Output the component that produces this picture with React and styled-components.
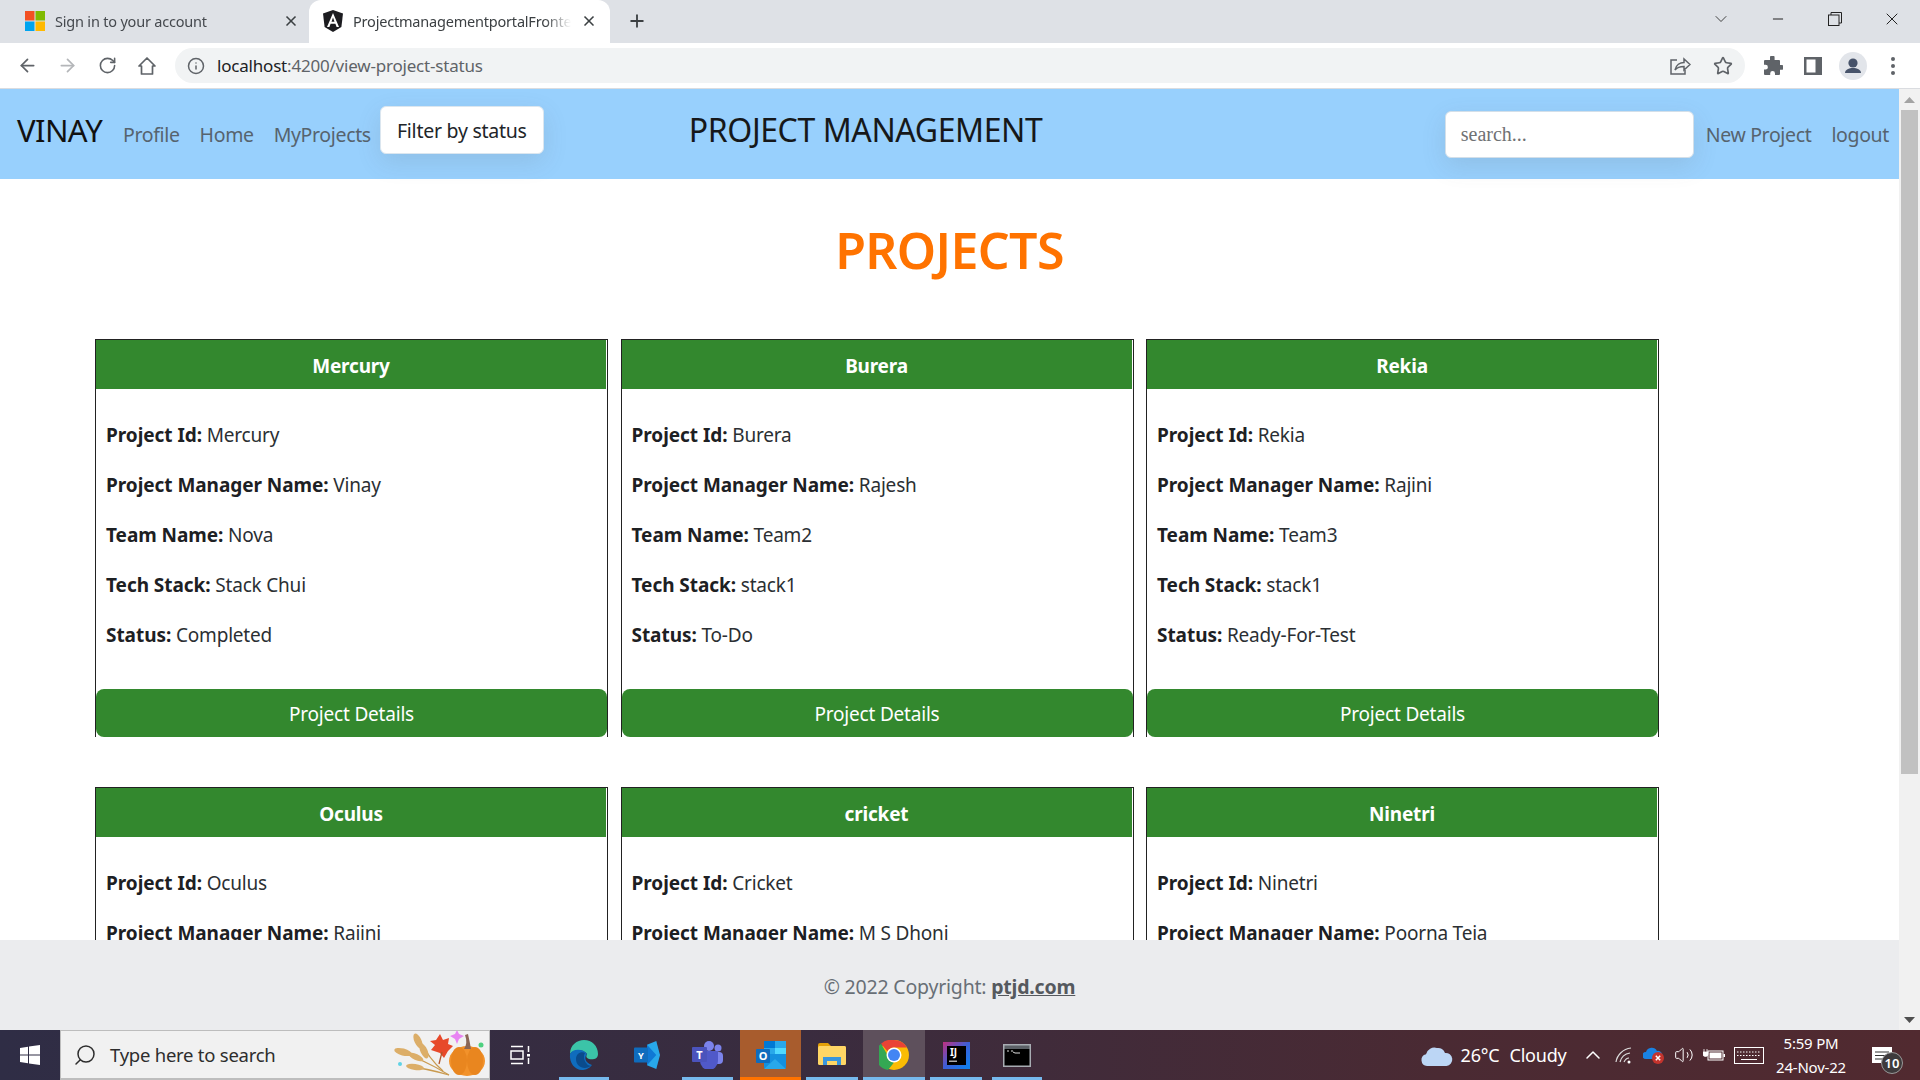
import styled, { createGlobalStyle } from 'styled-components'
import { ArrowLeft, ArrowRight, RotateCw, Info, Star, X, Plus, ChevronDown, Minus, ChevronUp, Search, Volume2 } from 'lucide-react'

const Global = createGlobalStyle`
    * { box-sizing: border-box; }
    html, body { margin: 0; padding: 0; overflow: hidden; }
    body { font-family: "Noto Sans", "Open Sans", sans-serif; color: #212529; }
`

const Screen = styled.div`
    width: 1920px;
    height: 1080px;
    display: flex;
    flex-direction: column;
    overflow: hidden;
    background: #fff;
`

/* browser chrome */
const TabStrip = styled.div`
    height: 43px;
    background: #dee1e6;
    display: flex;
    flex: none;
`
const Tab = styled.div`
    width: ${(p) => p.$width}px;
    height: 43px;
    padding: 0 ${(p) => p.$right}px 2px ${(p) => p.$left}px;
    display: flex;
    align-items: center;
    gap: 10px;
    border-radius: 12px 12px 0 0;
    background: ${(p) => (p.$active ? '#fff' : 'transparent')};
    font-size: 14.5px;
    letter-spacing: -0.2px;
    color: ${(p) => (p.$active ? '#3c4043' : '#45494e')};
    svg { flex: none; }
`
const TabTitle = styled.span`
    flex: 1;
    white-space: nowrap;
    overflow: hidden;
    -webkit-mask-image: linear-gradient(90deg, #000 88%, transparent);
    mask-image: linear-gradient(90deg, #000 88%, transparent);
`
const NewTab = styled.div`
    width: 54px;
    height: 41px;
    display: flex;
    align-items: center;
    justify-content: center;
    color: #3c4043;
`
const WindowControls = styled.div`
    margin-left: auto;
    height: 38px;
    display: flex;
    align-items: center;
    color: #222;
`
const WindowButton = styled.div`
    width: 57px;
    display: flex;
    justify-content: center;
`
const Toolbar = styled.div`
    height: 46px;
    flex: none;
    background: #fff;
    border-bottom: 1px solid #dadce0;
    display: flex;
    align-items: center;
    padding-left: 7px;
    color: #5f6368;
`
const ToolButton = styled.div`
    width: 40px;
    height: 36px;
    display: flex;
    align-items: center;
    justify-content: center;
    color: ${(p) => (p.$off ? '#b4b6b9' : '#5f6368')};
`
const Omnibox = styled.div`
    width: 1570px;
    height: 35px;
    margin: 0 8px;
    padding: 0 2px 0 12px;
    border-radius: 18px;
    background: #f1f3f4;
    display: flex;
    align-items: center;
    gap: 12px;
`
const Url = styled.span`
    flex: 1;
    font-size: 17px;
    letter-spacing: -0.2px;
    color: #5f6368;
    b { font-weight: 400; color: #202124; }
`

/* page */
const Viewport = styled.div`
    flex: 1;
    min-height: 0;
    display: flex;
`
const Page = styled.div`
    flex: 1;
    min-width: 0;
    display: flex;
    flex-direction: column;
`
const Nav = styled.nav`
    height: 90px;
    flex: none;
    padding: 0 10px 0 17px;
    background: #98d0fd;
    display: flex;
    align-items: flex-start;
`
const Brand = styled.div`
    width: 106px;
    margin-top: 21px;
    font-size: 31px;
    line-height: 40px;
    letter-spacing: -0.6px;
    color: #111;
`
const NavLink = styled.a`
    margin: 31px ${(p) => p.$gap ?? 20}px 0 0;
    font-size: 19.5px;
    line-height: 30px;
    letter-spacing: -0.35px;
    color: #56636e;
    white-space: nowrap;
`
const FilterButton = styled.button`
    width: 164px;
    height: 48px;
    margin: 17px 145px 0 9px;
    border: 1px solid #dbe6ef;
    border-radius: 6px;
    background: #fff;
    font: inherit;
    font-size: 19.5px;
    letter-spacing: -0.25px;
    color: #212529;
    box-shadow: 0 8px 24px rgba(90, 90, 90, 0.14);
`
const NavTitle = styled.div`
    margin-top: 19px;
    font-size: 32px;
    line-height: 44px;
    letter-spacing: -0.4px;
    color: #16181a;
    white-space: nowrap;
`
const SearchBox = styled.input`
    width: 249px;
    height: 47px;
    margin: 22px 12px 0 auto;
    padding: 0 15px;
    border: 1px solid #d3dfe9;
    border-radius: 6px;
    background: #fff;
    font-family: "Liberation Serif", serif;
    font-size: 20px;
    box-shadow: 0 8px 24px rgba(90, 90, 90, 0.14);
    &::placeholder { color: #6f7173; opacity: 1; }
`
const Content = styled.main`
    flex: 1;
    min-height: 0;
    overflow: hidden;
`
const Heading = styled.h1`
    margin: 0;
    height: 160px;
    padding-top: 39px;
    text-align: center;
    font-size: 50px;
    line-height: 64px;
    font-weight: 600;
    letter-spacing: -0.6px;
    color: #ff7300;
`
const Cards = styled.div`
    display: grid;
    grid-template-columns: repeat(3, 513px);
    column-gap: 12.5px;
    row-gap: 50px;
    padding-left: 95px;
`
const Card = styled.article`
    height: 398px;
    border: 1px solid #222;
    border-bottom: 0;
    display: flex;
    flex-direction: column;
`
const CardHeader = styled.h2`
    margin: 0 1px 0 0;
    height: 49px;
    padding-top: 2px;
    flex: none;
    display: flex;
    align-items: center;
    justify-content: center;
    background: #33882e;
    color: #fff;
    font-size: 19px;
    font-weight: 700;
    letter-spacing: -0.2px;
`
const CardBody = styled.div`
    flex: 1;
    padding: 31px 10px 0;
`
const Line = styled.p`
    margin: 0 0 20px;
    font-size: 19px;
    line-height: 30px;
    letter-spacing: -0.2px;
    color: #2b2f33;
    b { font-weight: 700; letter-spacing: -0.05px; color: #1d2023; }
`
const DetailsButton = styled.button`
    height: 48px;
    padding-top: 3px;
    flex: none;
    border: 0;
    border-radius: 8px;
    background: #33882e;
    color: #fff;
    font: inherit;
    font-size: 19px;
    letter-spacing: -0.2px;
`
const Footer = styled.footer`
    height: 90px;
    flex: none;
    padding-top: 32px;
    background: #ebecee;
    text-align: center;
    font-size: 19.5px;
    line-height: 30px;
    letter-spacing: -0.2px;
    color: #686f76;
    a { font-weight: 700; color: #55595e; text-decoration: underline; }
`
const Scrollbar = styled.div`
    width: 21px;
    flex: none;
    padding: 1px 2px 0;
    background: #f1f1f1;
    display: flex;
    flex-direction: column;
    align-items: center;
`
const ScrollArrow = styled.div`
    height: 20px;
    display: flex;
    align-items: center;
`
const ScrollThumb = styled.div`
    width: 17px;
    height: 664px;
    background: #c1c1c1;
`
const ScrollEnd = styled(ScrollArrow)`
    margin-top: auto;
`

/* taskbar */
const Taskbar = styled.div`
    height: 50px;
    flex: none;
    display: flex;
    align-items: center;
    color: #fff;
    background: linear-gradient(90deg, #2f2d45 0%, #392c3f 40%, #4a2a33 75%, #512a30 100%);
`
const StartButton = styled.div`
    width: 60px;
    display: flex;
    justify-content: center;
`
const TaskSearch = styled.div`
    width: 430px;
    height: 50px;
    padding-left: 12px;
    border: 1px solid #bdbdbd;
    border-bottom-width: 2px;
    background: #f1f1f1;
    display: flex;
    align-items: center;
    gap: 13px;
    font-size: 18.5px;
    letter-spacing: -0.25px;
    color: #2d2d2d;
    svg:last-child { margin-left: auto; }
`
const AppSlot = styled.div`
    width: ${(p) => p.$width || 61}px;
    height: 50px;
    position: relative;
    display: flex;
    align-items: center;
    justify-content: center;
    background: ${(p) => p.$bg || 'transparent'};
    &::after {
        content: '';
        position: absolute;
        display: ${(p) => (p.$mark ? 'block' : 'none')};
        left: ${(p) => p.$inset ?? 5}px;
        right: ${(p) => p.$inset ?? 5}px;
        bottom: 0;
        height: 3px;
        background: ${(p) => (p.$mark === 'alert' ? '#ff7300' : '#76b9ed')};
    }
`
const Tray = styled.div`
    margin-left: auto;
    height: 50px;
    padding-right: 13px;
    display: flex;
    align-items: center;
`
const TrayItem = styled.div`
    width: ${(p) => p.$width}px;
    display: flex;
    align-items: center;
    justify-content: center;
    font-size: 18px;
    letter-spacing: -0.2px;
    white-space: nowrap;
`
const Clock = styled.div`
    width: 92px;
    text-align: center;
    font-size: 15px;
    line-height: 24px;
    letter-spacing: -0.2px;
`
const Notify = styled.div`
    width: 50px;
    height: 50px;
    position: relative;
    display: flex;
    align-items: center;
    justify-content: center;
`
const Badge = styled.span`
    position: absolute;
    right: 4px;
    bottom: 6px;
    width: 22px;
    height: 22px;
    border-radius: 50%;
    border: 1px solid #999;
    background: #3e3a3c;
    display: flex;
    align-items: center;
    justify-content: center;
    font-size: 13px;
    font-weight: 600;
`

const MsLogo = () => (
    <svg width="20" height="20" viewBox="0 0 20 20">
        <rect width="9.5" height="9.5" fill="#f25022" />
        <rect x="10.5" width="9.5" height="9.5" fill="#7fba00" />
        <rect y="10.5" width="9.5" height="9.5" fill="#00a4ef" />
        <rect x="10.5" y="10.5" width="9.5" height="9.5" fill="#ffb900" />
    </svg>
)
const AngularLogo = () => (
    <svg width="20" height="22" viewBox="0 0 20 22">
        <path d="M10 0 L20 3.6 L18.4 17 L10 22 L1.6 17 L0 3.6Z" fill="#1c1c20" />
        <path d="M10 3 L4 17 H6.4 L7.6 13.8 H12.4 L13.6 17 H16Z M8.5 11.8 L10 7.6 L11.5 11.8Z" fill="#fff" fillRule="evenodd" />
    </svg>
)
const HomeIcon = () => (
    <svg width="20" height="20" viewBox="0 0 20 20" fill="none" stroke="#5f6368" strokeWidth="1.7" strokeLinejoin="round">
        <path d="M10 2 L18 10 H15.5 V18 H4.5 V10 H2Z" />
    </svg>
)
const ShareIcon = () => (
    <svg width="22" height="20" viewBox="0 0 22 20" fill="none" stroke="#5f6368" strokeWidth="1.5">
        <path d="M8 4H2v14h14v-4" />
        <path d="M6 14c1-5 5-7.5 9-7.5V3l6 5.5-6 5.5v-3.5c-4 0-7 1-9 3.5z" />
    </svg>
)
const PuzzleIcon = () => (
    <svg width="20" height="20" viewBox="0 0 20 20" fill="#5f6368">
        <path d="M7 1.5a2.3 2.3 0 0 1 4.6 0V4H16a1 1 0 0 1 1 1v4h1.5a2.4 2.4 0 0 1 0 4.8H17V18a1 1 0 0 1-1 1h-4v-1.5a2.4 2.4 0 0 0-4.8 0V19H2a1 1 0 0 1-1-1v-4.4h1.5a2.4 2.4 0 0 0 0-4.8H1V5a1 1 0 0 1 1-1h5z" />
    </svg>
)
const SidePanelIcon = () => (
    <svg width="18" height="18" viewBox="0 0 18 18">
        <rect width="18" height="18" fill="#5f6368" />
        <rect x="2.5" y="2.5" width="9" height="13" fill="#fff" />
    </svg>
)
const Avatar = () => (
    <svg width="28" height="28" viewBox="0 0 28 28">
        <circle cx="14" cy="14" r="14" fill="#e2e5ea" />
        <circle cx="14" cy="11" r="4.6" fill="#47536a" />
        <path d="M6 21c0-3.5 4-5 8-5s8 1.5 8 5z" fill="#47536a" />
    </svg>
)
const Dots = () => (
    <svg width="6" height="20" viewBox="0 0 6 20" fill="#5f6368">
        <circle cx="3" cy="3" r="2" /><circle cx="3" cy="10" r="2" /><circle cx="3" cy="17" r="2" />
    </svg>
)
const RestoreIcon = () => (
    <svg width="14" height="14" viewBox="0 0 14 14" fill="none" stroke="#222" strokeWidth="1">
        <rect x="0.5" y="3" width="10.5" height="10.5" />
        <path d="M3 3V0.5h10.500V11H11" />
    </svg>
)
const WindowsLogo = () => (
    <svg width="20" height="20" viewBox="0 0 20 20" fill="#fff">
        <path d="M0 3l8-1.2v7.700H0zM9 1.600L20 0v9.500H9zM0 10.500h8v7.700L0 17zM9 10.500h11V20L9 18.400z" />
    </svg>
)
const Harvest = () => (
    <svg width="96" height="48" viewBox="0 0 96 48">
        <g stroke="#c99a4f" strokeWidth="1.3" fill="none">
            <path d="M26 8 Q36 28 50 40" />
            <path d="M4 20 Q30 28 56 44" />
            <path d="M14 35 Q36 38 56 44" />
        </g>
        <g fill="#dcae68">
            <ellipse cx="25" cy="10" rx="3.5" ry="8" transform="rotate(-25 25 10)" />
            <ellipse cx="31" cy="20" rx="3.5" ry="8" transform="rotate(-25 31 20)" />
            <ellipse cx="10" cy="21" rx="9" ry="3.5" transform="rotate(15 10 21)" />
            <ellipse cx="23" cy="26" rx="8" ry="3" transform="rotate(25 23 26)" />
            <ellipse cx="22" cy="36" rx="9" ry="3" transform="rotate(8 22 36)" />
        </g>
        <path d="M47 3 L50 9 L56 7 L55 13 L60 15 L55 20 L51 27 L47 22 L38 19 L42 14 L37 10 L43 9Z" fill="#e7492a" />
        <path d="M49 21 L46 33" stroke="#b0552a" strokeWidth="1.3" />
        <path d="M62 3 L64 -1 L66 3 L71 5 L66 8 L64 13 L62 8 L57 5Z" fill="#e884f2" />
        <ellipse cx="74" cy="30" rx="18" ry="15" fill="#f2922b" />
        <ellipse cx="66" cy="30" rx="8" ry="14" fill="#e9861f" />
        <ellipse cx="82" cy="30" rx="8" ry="14" fill="#e9861f" />
        <path d="M71 18 Q75 12 72 4 L75 3 Q77 12 78 18Z" fill="#8a6656" />
        <circle cx="88" cy="14" r="2.5" fill="#4ed07f" />
        <circle cx="7" cy="33" r="2" fill="#5fd3e6" />
    </svg>
)
const TaskView = () => (
    <svg width="20" height="20" viewBox="0 0 20 20" fill="none" stroke="#fff" strokeWidth="1.5">
        <rect x="1" y="6" width="12" height="8" />
        <path d="M1 1.5h12M1 18.500h12M18.500 1v6M18.500 13v6" />
        <rect x="17" y="9" width="3" height="2.5" fill="#fff" stroke="none" />
    </svg>
)
const EdgeIcon = () => (
    <svg width="30" height="32" viewBox="0 0 30 32">
        <path d="M1 15C1 6 8 1 15 1c8 0 14 6 14 14 0 5-5 6-9 5-3-1-3-3-2-5-2-4-13-6-17 0z" fill="#3bc4a8" />
        <path d="M1 15c3-6 14-5 17 0-3 3-2 9 5 11-3 4-7 5-10 5-7 0-13-7-12-16z" fill="#0f6cbd" />
        <path d="M7 20c0-5 5-8 9-6-2 3-1 8 2 11 1 2 5 2 5 1-7 6-16 2-16-6z" fill="#0a4b8c" />
    </svg>
)
const YammerIcon = () => (
    <svg width="26" height="28" viewBox="0 0 28 30">
        <path d="M14 4 L24 0 L28 15 L24 30 L14 26Z" fill="#28a8ea" />
        <path d="M14 4 L24 15 L14 26Z" fill="#0f78d4" />
        <rect x="0" y="7" width="15" height="16" rx="1" fill="#0f6cbd" />
        <text x="7.5" y="19" fontSize="10" fontWeight="700" fill="#fff" textAnchor="middle">Y</text>
    </svg>
)
const TeamsIcon = () => (
    <svg width="32" height="28" viewBox="0 0 32 28">
        <circle cx="26" cy="7" r="3.5" fill="#7b83eb" />
        <rect x="20" y="11" width="11" height="12" rx="4" fill="#7b83eb" />
        <circle cx="17" cy="5" r="5" fill="#7b83eb" />
        <path d="M8 10h18v10a9 9 0 0 1-18 0z" fill="#5059c9" />
        <rect x="0" y="6" width="15" height="15" rx="1" fill="#4b53bc" />
        <text x="7.5" y="18" fontSize="11" fontWeight="700" fill="#fff" textAnchor="middle">T</text>
    </svg>
)
const OutlookIcon = () => (
    <svg width="30" height="28" viewBox="0 0 30 28">
        <rect x="8" y="0" width="22" height="14" fill="#28a8ea" />
        <rect x="8" y="0" width="11" height="7" fill="#0078d4" />
        <rect x="19" y="7" width="11" height="7" fill="#50d9ff" />
        <path d="M8 13 L30 13 V26 a2 2 0 0 1-2 2H10a2 2 0 0 1-2-2z" fill="#1490df" />
        <path d="M8 28 L19 18 L30 28z" fill="#28a8ea" />
        <rect x="0" y="8" width="14" height="14" rx="1" fill="#0f6cbd" />
        <text x="7" y="19" fontSize="11" fontWeight="700" fill="#fff" textAnchor="middle">O</text>
    </svg>
)
const FolderIcon = () => (
    <svg width="28" height="24" viewBox="0 0 28 24">
        <path d="M0 2a2 2 0 0 1 2-2h8l3 3h13a2 2 0 0 1 2 2v3H0z" fill="#e3a008" />
        <rect x="0" y="3" width="28" height="19" rx="1.5" fill="#ffd665" />
        <path d="M5 22V14h18v8h-4v-4H9v4z" fill="#3a96dd" />
    </svg>
)
const ChromeIcon = () => (
    <svg width="30" height="30" viewBox="0 0 30 30">
        <circle cx="15" cy="15" r="15" fill="#fbbc04" />
        <path d="M15 0a15 15 0 0 1 13 7.5H15a7.500 7.500 0 0 0-6.500 3.750L2 3.800A15 15 0 0 1 15 0z" fill="#ea4335" />
        <path d="M2 3.800l6.500 11.200a7.500 7.500 0 0 0 6.500 7.500L9 30A15 15 0 0 1 2 3.800z" fill="#34a853" />
        <circle cx="15" cy="15" r="7.5" fill="#fff" />
        <circle cx="15" cy="15" r="6" fill="#4285f4" />
    </svg>
)
const IdeaIcon = () => (
    <svg width="27" height="27" viewBox="0 0 27 27">
        <defs>
            <linearGradient id="ij" x1="0" y1="0" x2="1" y2="1">
                <stop offset="0" stopColor="#c2307f" />
                <stop offset="0.5" stopColor="#3b5fd8" />
                <stop offset="1" stopColor="#0a84ef" />
            </linearGradient>
        </defs>
        <rect width="27" height="27" fill="url(#ij)" />
        <rect x="4" y="4" width="19" height="19" fill="#000" />
        <text x="10.5" y="14" fontSize="10" fontWeight="700" fill="#fff" textAnchor="middle">IJ</text>
        <rect x="6" y="18.5" width="8" height="1.5" fill="#aaa" />
    </svg>
)
const ConsoleIcon = () => (
    <svg width="28" height="23" viewBox="0 0 28 23">
        <rect width="28" height="23" fill="#a8adb3" />
        <rect x="1.5" y="5" width="25" height="16.5" fill="#000" />
        <rect x="1.5" y="1.5" width="25" height="3.5" fill="#5b6066" />
        <path d="M4 7h2M8 7h2M10 8l2 1h5" stroke="#ddd" strokeWidth="1" />
    </svg>
)
const CloudIcon = () => (
    <svg width="32" height="22" viewBox="0 0 32 22">
        <path d="M6 22a6 6 0 0 1-1-11.800A8.500 8.500 0 0 1 16 4a7 7 0 0 1 8 5 6.500 6.500 0 0 1 1.500 13z" fill="#bcd6f5" />
    </svg>
)
const WifiIcon = () => (
    <svg width="18" height="17" viewBox="0 0 18 17" fill="none" stroke="#ddd" strokeWidth="1.2">
        <path d="M1 15C2 8 8 2 16 1M5 15c1-4 4-8 10-9M9 15c1-2 2-4 5-4" />
        <circle cx="14" cy="15" r="1.5" fill="#fff" stroke="none" />
    </svg>
)
const OneDriveIcon = () => (
    <svg width="22" height="20" viewBox="0 0 22 20">
        <path d="M3 14a3.500 3.500 0 0 1 0-7 6 6 0 0 1 11-1 4 4 0 0 1 2 8z" fill="#1a82e2" />
        <circle cx="15" cy="13" r="6" fill="#c4342d" />
        <path d="M12.800 10.800l4.400 4.400M17.200 10.800l-4.400 4.400" stroke="#fff" strokeWidth="1.5" />
    </svg>
)
const BatteryIcon = () => (
    <svg width="22" height="14" viewBox="0 0 22 14">
        <path d="M1 1v3M4 1v3M0 4h5v2a2.500 2.500 0 0 1-5 0z" fill="#fff" stroke="#fff" strokeWidth=".8" />
        <rect x="5" y="3" width="15" height="9" fill="none" stroke="#fff" />
        <rect x="6.5" y="4.5" width="12" height="6" fill="#fff" />
        <rect x="20.5" y="6" width="1.5" height="3" fill="#fff" />
    </svg>
)
const KeyboardIcon = () => (
    <svg width="30" height="17" viewBox="0 0 30 17" fill="none" stroke="#fff">
        <rect x="0.5" y="0.5" width="29" height="16" />
        <path d="M3 5h24M3 8.500h24" strokeDasharray="1.5 1.5" />
        <path d="M7 12.500h16" />
    </svg>
)
const NoteIcon = () => (
    <svg width="20" height="17" viewBox="0 0 20 17">
        <path d="M0 0h20v16H0z" fill="#fff" />
        <path d="M3 5h14M3 8.500h14M3 12h9" stroke="#333" strokeWidth="1.2" />
    </svg>
)

const projects = [
    { title: 'Mercury', id: 'Mercury', manager: 'Vinay', team: 'Nova', stack: 'Stack Chui', status: 'Completed' },
    { title: 'Burera', id: 'Burera', manager: 'Rajesh', team: 'Team2', stack: 'stack1', status: 'To-Do' },
    { title: 'Rekia', id: 'Rekia', manager: 'Rajini', team: 'Team3', stack: 'stack1', status: 'Ready-For-Test' },
    { title: 'Oculus', id: 'Oculus', manager: 'Rajini' },
    { title: 'cricket', id: 'Cricket', manager: 'M S Dhoni' },
    { title: 'Ninetri', id: 'Ninetri', manager: 'Poorna Teja' },
]

const ProjectCard = ({ title, id, manager, team, stack, status }) => (
    <Card>
        <CardHeader>{title}</CardHeader>
        <CardBody>
            <Line><b>Project Id:</b> {id}</Line>
            <Line><b>Project Manager Name:</b> {manager}</Line>
            {team && <Line><b>Team Name:</b> {team}</Line>}
            {stack && <Line><b>Tech Stack:</b> {stack}</Line>}
            {status && <Line><b>Status:</b> {status}</Line>}
        </CardBody>
        <DetailsButton>Project Details</DetailsButton>
    </Card>
)

const App = () => {
    return (
        <Screen>
            <Global />
            <TabStrip>
                <Tab $width={309} $left={25} $right={10}>
                    <MsLogo />
                    <TabTitle>Sign in to your account</TabTitle>
                    <X size={16} strokeWidth={2.5} color="#3c4043" />
                </Tab>
                <Tab $active $width={301} $left={14} $right={13}>
                    <AngularLogo />
                    <TabTitle>ProjectmanagementportalFrontend</TabTitle>
                    <X size={16} strokeWidth={2.5} color="#3c4043" />
                </Tab>
                <NewTab><Plus size={20} strokeWidth={2.2} /></NewTab>
                <WindowControls>
                    <WindowButton><ChevronDown size={20} strokeWidth={1} /></WindowButton>
                    <WindowButton><Minus size={16} strokeWidth={1.5} /></WindowButton>
                    <WindowButton><RestoreIcon /></WindowButton>
                    <WindowButton><X size={20} strokeWidth={1.2} /></WindowButton>
                </WindowControls>
            </TabStrip>
            <Toolbar>
                <ToolButton><ArrowLeft size={21} /></ToolButton>
                <ToolButton $off><ArrowRight size={21} /></ToolButton>
                <ToolButton><RotateCw size={19} /></ToolButton>
                <ToolButton><HomeIcon /></ToolButton>
                <Omnibox>
                    <Info size={18} />
                    <Url><b>localhost</b>:4200/view-project-status</Url>
                    <ShareIcon />
                    <ToolButton><Star size={20} /></ToolButton>
                </Omnibox>
                <ToolButton><PuzzleIcon /></ToolButton>
                <ToolButton><SidePanelIcon /></ToolButton>
                <ToolButton><Avatar /></ToolButton>
                <ToolButton><Dots /></ToolButton>
            </Toolbar>
            <Viewport>
                <Page>
                    <Nav>
                        <Brand>VINAY</Brand>
                        <NavLink>Profile</NavLink>
                        <NavLink>Home</NavLink>
                        <NavLink $gap={0}>MyProjects</NavLink>
                        <FilterButton>Filter by status</FilterButton>
                        <NavTitle>PROJECT MANAGEMENT</NavTitle>
                        <SearchBox placeholder="search..." />
                        <NavLink>New Project</NavLink>
                        <NavLink $gap={0}>logout</NavLink>
                    </Nav>
                    <Content>
                        <Heading>PROJECTS</Heading>
                        <Cards>
                            {projects.map((p) => (
                                <ProjectCard key={p.title} {...p} />
                            ))}
                        </Cards>
                    </Content>
                    <Footer>© 2022 Copyright: <a>ptjd.com</a></Footer>
                </Page>
                <Scrollbar>
                    <ScrollArrow>
                        <svg width="11" height="6" viewBox="0 0 11 6"><path d="M5.5 0L11 6H0z" fill="#a3a3a3" /></svg>
                    </ScrollArrow>
                    <ScrollThumb />
                    <ScrollEnd>
                        <svg width="11" height="6" viewBox="0 0 11 6"><path d="M5.5 6L11 0H0z" fill="#505050" /></svg>
                    </ScrollEnd>
                </Scrollbar>
            </Viewport>
            <Taskbar>
                <StartButton><WindowsLogo /></StartButton>
                <TaskSearch>
                    <Search size={24} strokeWidth={1.5} style={{ transform: 'scaleX(-1)' }} />
                    Type here to search
                    <Harvest />
                </TaskSearch>
                <AppSlot $width={60}><TaskView /></AppSlot>
                <AppSlot $width={68} $mark="open" $inset={9}><EdgeIcon /></AppSlot>
                <AppSlot $width={57}><YammerIcon /></AppSlot>
                <AppSlot $width={65} $mark="open" $inset={7}><TeamsIcon /></AppSlot>
                <AppSlot $bg="#a85c2d" $mark="alert" $inset={0}><OutlookIcon /></AppSlot>
                <AppSlot $width={62} $mark="open"><FolderIcon /></AppSlot>
                <AppSlot $width={62} $bg="#5e505c" $mark="open" $inset={0}><ChromeIcon /></AppSlot>
                <AppSlot $width={62} $mark="open"><IdeaIcon /></AppSlot>
                <AppSlot $width={60} $mark="open"><ConsoleIcon /></AppSlot>
                <Tray>
                    <TrayItem $width={40}><CloudIcon /></TrayItem>
                    <TrayItem $width={46}>26°C</TrayItem>
                    <TrayItem $width={70}>Cloudy</TrayItem>
                    <TrayItem $width={40}><ChevronUp size={24} strokeWidth={1.5} /></TrayItem>
                    <TrayItem $width={22}><WifiIcon /></TrayItem>
                    <TrayItem $width={38}><OneDriveIcon /></TrayItem>
                    <TrayItem $width={22}><Volume2 size={20} strokeWidth={1.2} /></TrayItem>
                    <TrayItem $width={38}><BatteryIcon /></TrayItem>
                    <TrayItem $width={32}><KeyboardIcon /></TrayItem>
                    <Clock>5:59 PM<br />24-Nov-22</Clock>
                    <Notify>
                        <NoteIcon />
                        <Badge>10</Badge>
                    </Notify>
                </Tray>
            </Taskbar>
        </Screen>
    )
}

export default App
